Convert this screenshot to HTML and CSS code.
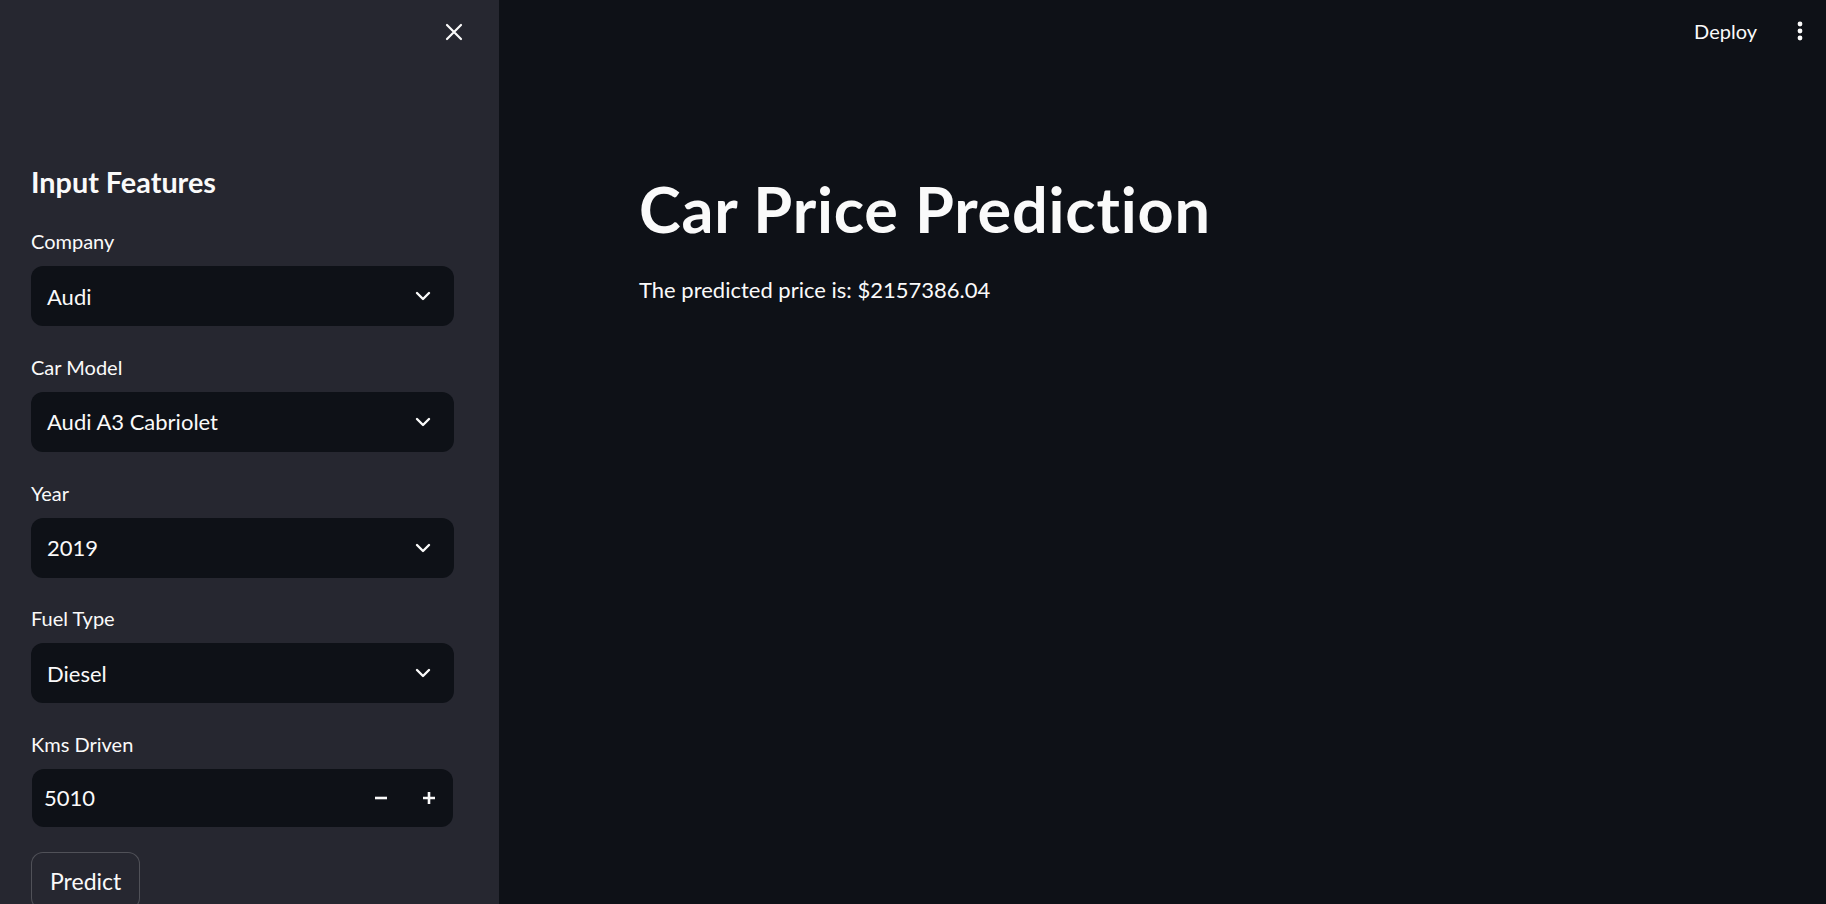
FILE: index.html
```html
<!DOCTYPE html>
<html lang="en">
<head>
<meta charset="utf-8">
<title>Car Price Prediction</title>
<link rel="stylesheet" href="styles.css">
</head>
<body>
<aside class="sidebar">
  <div class="sidebar-top">
    <button class="close-btn" aria-label="Close sidebar">
      <svg width="18" height="18" viewBox="0 0 18 18"><path d="M2 2 L16 16 M16 2 L2 16" stroke="#fafafa" stroke-width="2.2" stroke-linecap="round" fill="none"/></svg>
    </button>
  </div>
  <h2 class="side-title">Input Features</h2>
  <div class="fields">
    <div class="field">
      <label class="field-label">Company</label>
      <div class="select"><span>Audi</span><svg class="chev" width="16" height="10" viewBox="0 0 16 10"><path d="M2 2 L8 8 L14 2" stroke="#fafafa" stroke-width="2.4" fill="none" stroke-linecap="round" stroke-linejoin="round"/></svg></div>
    </div>
    <div class="field">
      <label class="field-label">Car Model</label>
      <div class="select"><span>Audi A3 Cabriolet</span><svg class="chev" width="16" height="10" viewBox="0 0 16 10"><path d="M2 2 L8 8 L14 2" stroke="#fafafa" stroke-width="2.4" fill="none" stroke-linecap="round" stroke-linejoin="round"/></svg></div>
    </div>
    <div class="field">
      <label class="field-label">Year</label>
      <div class="select"><span>2019</span><svg class="chev" width="16" height="10" viewBox="0 0 16 10"><path d="M2 2 L8 8 L14 2" stroke="#fafafa" stroke-width="2.4" fill="none" stroke-linecap="round" stroke-linejoin="round"/></svg></div>
    </div>
    <div class="field">
      <label class="field-label">Fuel Type</label>
      <div class="select"><span>Diesel</span><svg class="chev" width="16" height="10" viewBox="0 0 16 10"><path d="M2 2 L8 8 L14 2" stroke="#fafafa" stroke-width="2.4" fill="none" stroke-linecap="round" stroke-linejoin="round"/></svg></div>
    </div>
    <div class="field">
      <label class="field-label">Kms Driven</label>
      <div class="number"><span class="num-val">5010</span>
        <div class="steps">
          <span class="step"><svg width="14" height="14" viewBox="0 0 14 14"><path d="M1 7 H13" stroke="#fafafa" stroke-width="2.6"/></svg></span>
          <span class="step"><svg width="14" height="14" viewBox="0 0 14 14"><path d="M1 7 H13 M7 1 V13" stroke="#fafafa" stroke-width="2.6"/></svg></span>
        </div>
      </div>
    </div>
  </div>
  <button class="predict">Predict</button>
</aside>
<main class="main">
  <header class="topbar">
    <span class="deploy">Deploy</span>
    <span class="kebab"><svg width="6" height="20" viewBox="0 0 6 20"><circle cx="3" cy="3" r="2.4" fill="#fafafa"/><circle cx="3" cy="10" r="2.4" fill="#fafafa"/><circle cx="3" cy="17" r="2.4" fill="#fafafa"/></svg></span>
  </header>
  <section class="content">
    <h1 class="title">Car Price Prediction</h1>
    <p class="result">The predicted price is: $2157386.04</p>
  </section>
</main>
</body>
</html>
```
FILE: styles.css
```css
* { box-sizing: border-box; }
html, body {
  margin: 0;
  height: 100%;
}
body {
  display: flex;
  overflow: hidden;
  font-family: Lato, "Noto Sans", sans-serif;
  color: #fafafa;
  background: #0e1117;
}
.sidebar {
  width: 499px;
  flex: none;
  background: #262730;
  padding: 0 45px 0 31px;
  height: 100%;
}
.sidebar-top {
  height: 64px;
  display: flex;
  justify-content: flex-end;
  align-items: center;
  margin-right: -9px;
}
.close-btn {
  background: none;
  border: 0;
  padding: 0;
  width: 18px;
  height: 18px;
  display: flex;
  align-items: center;
  justify-content: center;
}
.side-title {
  margin: 100.6px 0 0;
  font-size: 28.8px;
  line-height: 34.6px;
  font-weight: 700;
  height: 34.6px;
}
.fields {
  margin-top: 30px;
  display: flex;
  flex-direction: column;
  gap: 28.7px;
}
.field {
  display: flex;
  flex-direction: column;
}
.field-label {
  font-size: 20px;
  line-height: 24px;
  height: 24px;
  margin-bottom: 13px;
}
.select, .number {
  height: 60px;
  background: #0e1117;
  border-radius: 12px;
  display: flex;
  align-items: center;
  justify-content: space-between;
  font-size: 22px;
}
.select {
  padding: 0 23px 0 16px;
}
.number {
  height: 58px;
  margin: 0 1px;
  padding: 0 17px 0 12px;
}
.steps {
  display: flex;
  gap: 34px;
}
.step {
  width: 14px;
  height: 14px;
  display: flex;
}
.predict {
  margin-top: 25px;
  height: 58px;
  padding: 0 18px;
  background: #262730;
  border: 1px solid rgba(250, 250, 250, 0.2);
  border-radius: 12px;
  color: #fafafa;
  font-family: inherit;
  font-size: 23px;
}
.main {
  flex: 1;
  display: flex;
  flex-direction: column;
}
.topbar {
  height: 62px;
  display: flex;
  justify-content: flex-end;
  align-items: center;
  padding-right: 23px;
  gap: 40px;
}
.deploy {
  font-size: 20px;
  line-height: 24px;
}
.kebab {
  width: 6px;
  height: 20px;
  display: flex;
}
.content {
  padding-left: 140px;
}
.title {
  margin: 108.8px 0 0;
  font-size: 63px;
  letter-spacing: 0.8px;
  line-height: 75.6px;
  font-weight: 700;
}
.result {
  margin: 31px 0 0;
  font-size: 22px;
  line-height: 1.2;
}
```
